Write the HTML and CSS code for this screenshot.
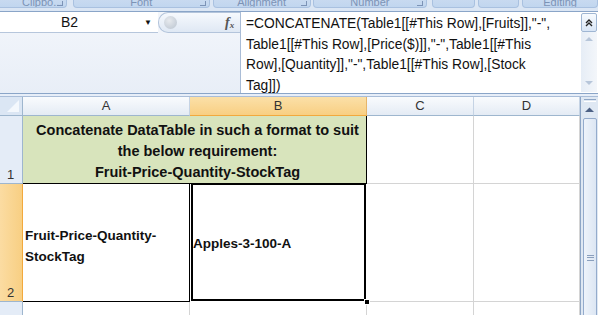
FILE: index.html
```html
<!DOCTYPE html>
<html>
<head>
<meta charset="utf-8">
<link rel="stylesheet" href="styles.css">
</head>
<body>
<div class="ribbon">
  <div class="grp g1"><span>Clipbo...</span><i class="launch"></i></div>
  <div class="grp g2"><span>Font</span><i class="launch"></i></div>
  <div class="grp g3"><span>Alignment</span><i class="launch"></i></div>
  <div class="grp g4"><span>Number</span><i class="launch"></i></div>
  <div class="grp g5"><span></span></div>
  <div class="grp g6"><span></span></div>
  <div class="grp g7"><span>Editing</span></div>
</div>
<div class="fbar">
  <div class="namecol">
    <div class="namerow">
      <div class="namebox"><span class="ref">B2</span><span class="drop">&#9660;</span></div>
      <div class="pill"><span class="knob"></span><span class="fx">f<sub>x</sub></span></div>
    </div>
  </div>
  <div class="formula">=CONCATENATE(Table1[[#This Row],[Fruits]],"-",<br>Table1[[#This Row],[Price($)]],"-",Table1[[#This<br>Row],[Quantity]],"-",Table1[[#This Row],[Stock<br>Tag]])</div>
  <div class="fscroll">
    <div class="fbtn">
      <svg width="10" height="10" viewBox="0 0 10 10"><path d="M2 5 L5 2 L8 5 M2 8 L5 5 L8 8" fill="none" stroke="#222" stroke-width="1.4"/></svg>
    </div>
    <div class="ftrack">
      <svg class="up" width="8" height="5" viewBox="0 0 8 5"><path d="M0 5 L4 1 L8 5Z" fill="#b7c6da"/></svg>
      <svg class="dn" width="8" height="5" viewBox="0 0 8 5"><path d="M0 0 L4 4 L8 0Z" fill="#b7c6da"/></svg>
    </div>
  </div>
</div>
<div class="gap"></div>
<div class="sheet">
  <div class="corner"><svg width="12" height="12" viewBox="0 0 12 12"><path d="M12 0 L12 12 L0 12Z" fill="#f4f8fd"/></svg></div>
  <div class="ch">A</div>
  <div class="ch sel">B</div>
  <div class="ch">C</div>
  <div class="ch">D</div>
  <div class="vscroll">
    <div class="split"></div>
    <div class="vup"><svg width="9" height="5" viewBox="0 0 9 5"><path d="M0 5 L4.5 0.5 L9 5Z" fill="#4d6185"/></svg></div>
    <div class="thumb"><div class="grip"></div></div>
  </div>

  <div class="rh">1</div>
  <div class="c title">Concatenate DataTable in such a format to suit<br>the below requirement:<br>Fruit-Price-Quantity-StockTag</div>
  <div class="c"></div>
  <div class="c"></div>

  <div class="rh rsel">2</div>
  <div class="c a2">Fruit-Price-Quantity-<br>StockTag</div>
  <div class="c b2"><div class="selbox">Apples-3-100-A</div><i class="handle"></i></div>
  <div class="c"></div>
  <div class="c"></div>

  <div class="rh">3</div>
  <div class="c"></div>
  <div class="c"></div>
  <div class="c"></div>
  <div class="c"></div>
</div>
</body>
</html>
```
FILE: styles.css
```css
* { box-sizing: border-box; }
html, body { margin: 0; padding: 0; }
body {
  width: 598px; height: 315px; overflow: hidden;
  background: #dfe9f5;
  font-family: "Liberation Sans", Arial, sans-serif;
}
.ribbon {
  height: 11px; display: flex; background: #dbe6f4; position: relative;
}
.grp {
  height: 8px; position: relative; overflow: hidden;
  background: linear-gradient(#c8daf0, #c1d6ef);
  border: 1px solid #a9c1e0; border-top: none;
  border-radius: 0 0 4px 4px;
  display: flex; justify-content: center; align-items: flex-end;
  color: #7c93b6; font-size: 11px; line-height: 11px;
}
.grp span { margin-bottom: -1px; }
.g1 { width: 70px; margin-left: -3px; justify-content: flex-start; padding-left: 24px; }
.g2 { width: 137px; margin-left: 6px; }
.g3 { width: 98px; margin-left: 3px; }
.g4 { width: 115px; margin-left: 2px; }
.g5 { width: 43px; margin-left: 5px; }
.g6 { width: 41px; margin-left: 3px; }
.g7 { width: 76px; margin-left: 3px; }
.launch {
  position: absolute; right: 3px; bottom: 1px; width: 6px; height: 5px;
  border-right: 1px solid #7c93b6; border-bottom: 1px solid #7c93b6;
}
.fbar {
  height: 83px; display: flex; background: #fff;
  border-top: 1px solid #8aa5c8; border-bottom: 1px solid #8aa5c8;
}
.namecol {
  width: 241px; background: linear-gradient(#f3f6fb, #e8eef7);
  border-right: 1px solid #a9bcd6;
}
.namerow { display: flex; height: 21px; }
.namebox {
  width: 158px; height: 21px; background: #fff;
  border-bottom: 1px solid #b6c6dc; position: relative;
  font-size: 14px;
}
.ref { position: absolute; left: 61px; top: 2px; color: #111; }
.drop { position: absolute; left: 144px; top: 6px; font-size: 8px; color: #111; }
.pill {
  flex: 1; height: 21px; position: relative;
  background: linear-gradient(#f6f9fd, #dfe8f4);
  border-radius: 10px 0 0 10px;
  border: 1px solid #b3c4db; border-right: none;
}
.knob {
  position: absolute; left: 5px; top: 3px; width: 13px; height: 13px; border-radius: 50%;
  background: radial-gradient(circle at 40% 35%, #e7eaee, #b9c3cf);
}
.fx {
  position: absolute; left: 66px; top: 2px;
  font-family: "Liberation Serif", serif; font-style: italic; font-weight: bold;
  font-size: 14px; color: #555;
}
.fx sub { font-size: 9px; vertical-align: -1px; }
.formula {
  flex: 1; padding: 2px 0 0 5px; font-size: 13.8px; line-height: 20.5px; color: #111;
  white-space: nowrap; overflow: hidden;
}
.fscroll {
  width: 17px; display: flex; flex-direction: column; padding: 1px 1px 1px 0;
  background: #fff;
}
.fbtn {
  height: 19px; border: 1px solid #9fb6d3; border-radius: 2px;
  background: linear-gradient(#f7fbff, #d9e6f6);
  display: flex; align-items: center; justify-content: center;
}
.ftrack {
  flex: 1; background: linear-gradient(90deg, #e6edf6, #f3f6fa);
  display: flex; flex-direction: column; justify-content: space-between; align-items: center;
  padding: 4px 0 6px;
}
.gap { height: 3px; background: #e7eef8; border-bottom: 1px solid #a9bdd8; }
.sheet {
  display: grid;
  grid-template-columns: 23px 167px 177px 107px 106px 18px;
  grid-template-rows: 19px 68px 118px 30px;
  background: #fff;
}
.corner {
  background: #dbe6f4; border-right: 1px solid #9eb6ce; border-bottom: 1px solid #9eb6ce;
  display: flex; align-items: flex-end; justify-content: flex-end; padding: 0 3px 3px 0;
}
.ch {
  background: linear-gradient(#f9fbfd, #e4ebf4);
  border-right: 1px solid #c5d3e4; border-bottom: 1px solid #9eb6ce;
  font-size: 13px; color: #333; text-align: center; line-height: 18px;
}
.ch.sel {
  background: linear-gradient(#fbe0a8, #f8cf83);
  border-bottom: 1px solid #f2a93d; border-right-color: #e6b56a;
}
.vscroll {
  grid-column: 6; grid-row: 1 / span 4;
  background: #dfe8f3; border-left: 1px solid #8ea6c6;
  display: flex; flex-direction: column; align-items: center;
}
.split { width: 12px; height: 3px; margin-top: 2px; border-top: 1px solid #8ea6c6; border-bottom: 1px solid #fff; }
.vup { height: 11px; display: flex; align-items: center; margin-top: 2px; }
.thumb {
  width: 14px; flex: 1; margin-top: 3px;
  border: 1px solid #94abcc; border-radius: 2px;
  background: linear-gradient(90deg, #eef3fa, #dce6f3);
  position: relative;
}
.grip {
  position: absolute; left: 3px; top: 136px; width: 7px; height: 6px;
  border-top: 1px solid #8a9fbd; border-bottom: 1px solid #8a9fbd;
}
.grip::after { content: ""; position: absolute; left: 0; right: 0; top: 1px; height: 2px; border-top: 1px solid #8a9fbd; border-bottom: 1px solid #8a9fbd; }
.rh {
  background: #e4ecf7; border-right: 1px solid #9eb6ce; border-bottom: 1px solid #9eb6ce;
  font-size: 13px; color: #333; display: flex; align-items: flex-end; padding: 0 0 1px 7px;
}
.rh.rsel { background: linear-gradient(90deg, #fbdca2, #f8cf83); border-right: 1px solid #f2a93d; }
.c { border-right: 1px solid #d4d4d4; border-bottom: 1px solid #d4d4d4; }
.title {
  grid-column: 2 / span 2; background: #d8e4bc;
  border-right: 1px solid #000; border-bottom: 1px solid #000;
  font-weight: bold; font-size: 14.5px; line-height: 21px; text-align: center; color: #111;
  padding-top: 4px; padding-left: 6px; white-space: nowrap;
}
.a2 {
  border-right: 1px solid #000; border-bottom: 1px solid #000;
  font-weight: bold; font-size: 13.5px; line-height: 21px; color: #111;
  display: flex; align-items: center; padding: 6px 0 0 2px;
}
.b2 { position: relative; padding: 0 1px 1px 1px; border-right: none; border-bottom: none; }
.selbox {
  height: 100%; border: 2px solid #000; border-top: 1px solid #000;
  font-weight: bold; font-size: 13.5px; color: #111;
  display: flex; align-items: center; padding: 2px 0 0 0;
}
.handle {
  position: absolute; right: -3px; bottom: -3px; width: 6px; height: 6px;
  background: #000; border: 1px solid #fff;
}
```
